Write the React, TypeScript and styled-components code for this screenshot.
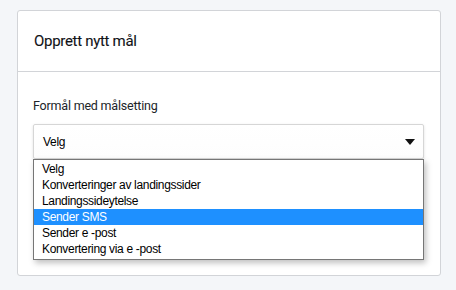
import React from 'react';
import styled, { createGlobalStyle } from 'styled-components';

const options = [
  'Velg',
  'Konverteringer av landingssider',
  'Landingssideytelse',
  'Sender SMS',
  'Sender e -post',
  'Konvertering via e -post',
];

const GlobalStyle = createGlobalStyle`
  body {
    margin: 0;
    background: #f4f6f9;
    font-family: Roboto, sans-serif;
  }
`;

const Page = styled.div`
  width: 456px;
  height: 290px;
  padding: 10px 0 0 17px;
  box-sizing: border-box;
`;

const Card = styled.div`
  width: 424px;
  height: 266px;
  box-sizing: border-box;
  background: #fff;
  border: 1px solid #d2d4d8;
  border-radius: 3px;
`;

const CardHeader = styled.div`
  height: 60px;
  display: flex;
  align-items: center;
  padding: 0 15px 0 16px;
  border-bottom: 1px solid #d2d4d8;
`;

const Title = styled.h2`
  margin: 0;
  font-family: Roboto, sans-serif;
  font-size: 15px;
  letter-spacing: -0.3px;
  font-weight: 400;
  color: #111317;
  -webkit-text-stroke: 0.1px #111317;
`;

const CardBody = styled.div`
  padding: 26px 15px 0 15px;
`;

const Label = styled.label`
  display: block;
  font-family: Roboto, sans-serif;
  font-size: 12.5px;
  letter-spacing: -0.2px;
  font-weight: 400;
  color: #212529;
  margin-bottom: 11px;
`;

const SelectWrap = styled.div`
  position: relative;
  width: 391px;
`;

const SelectBox = styled.div`
  height: 35px;
  box-sizing: border-box;
  display: flex;
  align-items: center;
  justify-content: space-between;
  padding: 0 8px 0 9px;
  background: linear-gradient(#fff, #fdfdfd);
  border: 1px solid #d6d6d6;
  border-radius: 2px;
  box-shadow: 0 1px 3px rgba(0, 0, 0, 0.12);
  font-family: "Liberation Sans", Arial, sans-serif;
  font-size: 12px;
  letter-spacing: -0.3px;
  color: #000;
`;

const Caret = styled.svg`
  width: 10px;
  height: 6px;
`;

const DropList = styled.ul`
  position: absolute;
  top: 35px;
  left: 0;
  right: 0;
  margin: 0;
  padding: 1px 0 2px;
  list-style: none;
  background: #fff;
  border: 1px solid #767676;
  box-shadow: 2px 3px 6px rgba(0, 0, 0, 0.25);
  font-family: "Liberation Sans", Arial, sans-serif;
  font-size: 12px;
  letter-spacing: -0.33px;
`;

const Option = styled.li<{ active?: boolean }>`
  height: 16px;
  line-height: 16px;
  padding: 0 8px;
  color: ${(p) => (p.active ? '#fff' : '#000')};
  background: ${(p) => (p.active ? '#1e90ff' : 'transparent')};
`;

export default function App() {
  return (
    <>
      <GlobalStyle />
      <Page>
        <Card>
          <CardHeader>
            <Title>Opprett nytt mål</Title>
          </CardHeader>
          <CardBody>
            <Label>Formål med målsetting</Label>
            <SelectWrap>
              <SelectBox>
                <span>Velg</span>
                <Caret viewBox="0 0 10 6">
                  <path d="M0 0h10L5 6z" fill="#111" />
                </Caret>
              </SelectBox>
              <DropList>
                {options.map((o) => (
                  <Option key={o} active={o === 'Sender SMS'}>
                    {o}
                  </Option>
                ))}
              </DropList>
            </SelectWrap>
          </CardBody>
        </Card>
      </Page>
    </>
  );
}
